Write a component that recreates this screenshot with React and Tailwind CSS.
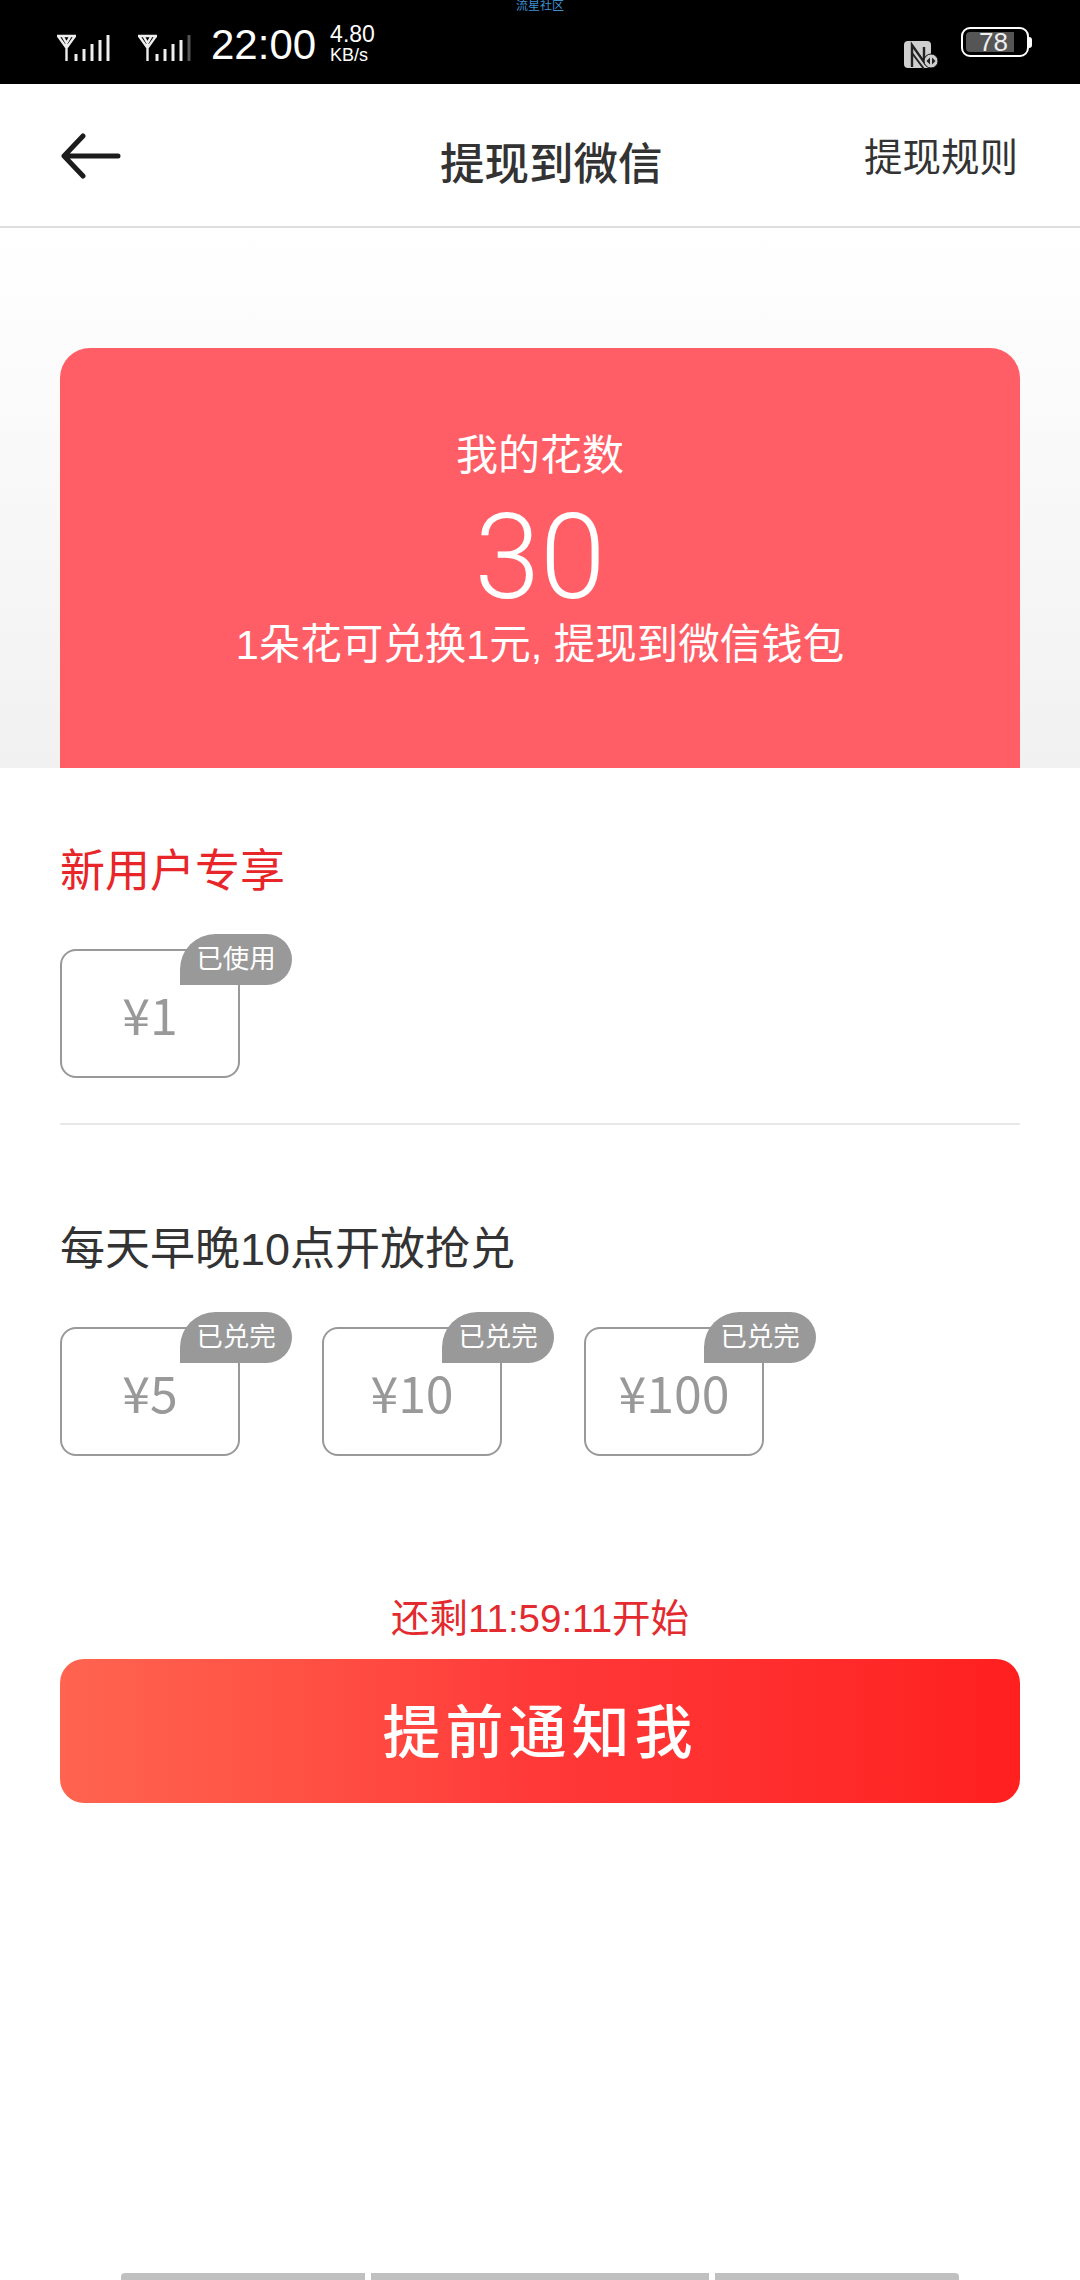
import React from 'react';

const cjk = '"Liberation Sans", "Noto Sans CJK SC", sans-serif';

// Signal icon: antenna plus five bars, the last one dim when the slot is weak
const Signal = ({ faded }) => (
  <svg width="54" height="29" viewBox="0 0 54 29" fill="none" className="block">
    <path d="M1 2H20M2 2L10.5 14L19 2M7 3L10.5 9L14 3M10.5 10V27" stroke="#eee" strokeWidth="2.4" />
    <path d="M20 20V27M28 15V27M36 10V27M44 6V27" stroke="#eee" strokeWidth="3" />
    <path d="M52 1V27" stroke={faded ? '#555' : '#eee'} strokeWidth="3" />
  </svg>
);

const NfcIcon = () => (
  <svg width="36" height="30" viewBox="0 0 36 30" fill="none" className="block">
    <rect x="0" y="1" width="27" height="27" rx="4" fill="#cfcfcf" />
    <path d="M8 27V5L20 22V7" stroke="#222" strokeWidth="2.4" />
    <path d="M8 13L20 29" stroke="#222" strokeWidth="2" />
    <circle cx="27" cy="21" r="7" fill="#cfcfcf" stroke="#111" strokeWidth="1" />
    <path d="M26 17.5L22.5 21L26 24.5ZM28 17.5L31.5 21L28 24.5Z" fill="#222" />
  </svg>
);

const BackArrow = () => (
  <svg width="60" height="46" viewBox="0 0 60 46" fill="none" className="block">
    <path d="M57 23H4M22 3L3 23L22 43" stroke="#1c1c1c" strokeWidth="5" strokeLinecap="round" strokeLinejoin="round" />
  </svg>
);

const StatusBar = () => (
  <div className="relative h-[84px] bg-black flex items-start text-white shrink-0 pl-[56px] pr-[48px]">
    <span className="absolute left-0 right-0 top-[-1px] text-center text-[12px] leading-[14px] text-[#3f8fd0]">流星社区</span>
    <div className="mt-[34px]"><Signal /></div>
    <div className="mt-[34px] ml-[27px]"><Signal faded /></div>
    <span className="ml-[20px] mt-[21px] text-[42px] leading-[48px]">22:00</span>
    <div className="ml-[14px] mt-[23px] flex flex-col">
      <span className="text-[23px] leading-[23px]">4.80</span>
      <span className="text-[18px] leading-[18px]">KB/s</span>
    </div>
    <div className="ml-auto mt-[40px] mr-[21px]"><NfcIcon /></div>
    <div className="mt-[27px] flex items-center">
      <div className="w-[68px] h-[30px] rounded-[9px] border-2 border-white p-[3px] flex">
        <div className="w-[48px] h-full rounded-l-[4px] bg-[#555] text-[26px] leading-[20px] pl-[13px] text-[#eee]">78</div>
      </div>
      <div className="w-[3px] h-[11px] bg-white rounded-r-sm" />
    </div>
  </div>
);

const Header = () => (
  <div className="relative h-[144px] bg-white border-b-2 border-[#dedede] shrink-0 flex items-center justify-between pl-[61px] pr-[62px]">
    <div className="mt-[2px]"><BackArrow /></div>
    <span className="absolute left-[440px] top-[53px] text-[44.5px] leading-[56px] font-medium text-[#333]">提现到微信</span>
    <span className="text-[38.5px] leading-[48px] text-[#333] mt-[6px]">提现规则</span>
  </div>
);

const Voucher = ({ value, badge }) => (
  <div className="relative w-[180px] h-[129px] rounded-[16px] border-2 border-[#999] flex items-center justify-center">
    <span className="text-[50px] leading-[56px] text-[#999] -mt-[2px]" style={{ fontFamily: '"Noto Sans CJK SC", sans-serif' }}>¥{value}</span>
    <span className="absolute left-[118px] top-[-17px] w-[112px] h-[51px] bg-[#999] rounded-tl-[36px] rounded-tr-[26px] rounded-br-[26px] flex items-center justify-center text-[26.5px] text-white">
      {badge}
    </span>
  </div>
);

export default function App() {
  return (
    <div className="w-[1080px] h-[2280px] bg-white flex flex-col overflow-hidden" style={{ fontFamily: cjk }}>
      <StatusBar />
      <Header />

      {/* Flower count card */}
      <div className="h-[540px] shrink-0 px-[60px] pt-[120px] bg-gradient-to-b from-white to-[#f1f1f1]">
        <div className="h-[420px] rounded-t-[30px] bg-[#ff5e66] text-white flex flex-col items-center pt-[80px]">
          <span className="text-[42px] leading-[56px]">我的花数</span>
          <span className="text-[118px] leading-[112px] mt-[18px]" style={{ fontFamily: 'Roboto, sans-serif', fontWeight: 300 }}>30</span>
          <span className="text-[41.5px] leading-[52px] mt-[5px]">1朵花可兑换1元, 提现到微信钱包</span>
        </div>
      </div>

      <div className="px-[60px]">
        <h2 className="mt-[74px] text-[45px] leading-[60px] text-[#e8262a]">新用户专享</h2>
        <div className="mt-[47px] pb-[45px] border-b-2 border-[#e8e8e8]">
          <Voucher value="1" badge="已使用" />
        </div>

        <h2 className="mt-[95px] text-[45px] leading-[60px] text-[#333]">每天早晚10点开放抢兑</h2>
        <div className="mt-[47px] flex gap-[82px]">
          <Voucher value="5" badge="已兑完" />
          <Voucher value="10" badge="已兑完" />
          <Voucher value="100" badge="已兑完" />
        </div>

        <p className="mt-[139px] text-center text-[38.5px] leading-[48px] text-[#e32a2e]">还剩11:59:11开始</p>
        <button className="mt-[16px] w-full h-[144px] pt-[2px] rounded-[24px] bg-gradient-to-r from-[#ff6450] via-[#ff3838] to-[#ff1f1f] text-white text-[58px] font-medium tracking-[5px]">
          提前通知我
        </button>
      </div>

      {/* Bottom home indicator segments */}
      <div className="mt-auto flex justify-center gap-[6px]">
        <div className="w-[244px] h-[7px] bg-[#c0c0c0] rounded-tl-[4px]" />
        <div className="w-[338px] h-[7px] bg-[#c0c0c0]" />
        <div className="w-[244px] h-[7px] bg-[#c0c0c0] rounded-tr-[4px]" />
      </div>
    </div>
  );
}
